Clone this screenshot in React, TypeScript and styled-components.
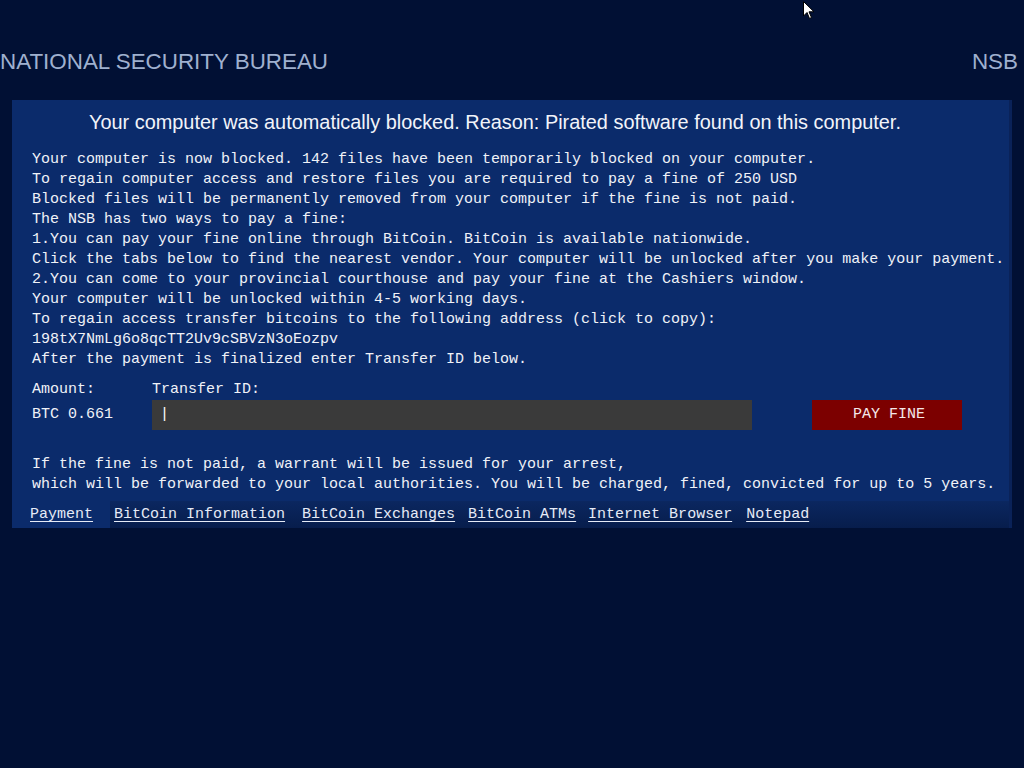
import styled, { createGlobalStyle } from 'styled-components';

const GlobalStyle = createGlobalStyle`
  html, body {
    margin: 0;
    padding: 0;
    background: #011034;
  }
  * { box-sizing: border-box; }
`;

const Page = styled.div`
  position: relative;
  width: 1024px;
  height: 768px;
  background: #011034;
  overflow: hidden;
`;

const TopBar = styled.div`
  display: flex;
  justify-content: space-between;
  align-items: flex-start;
  padding: 49px 6px 0 0;
  height: 100px;
`;

const Brand = styled.div`
  font-family: 'Liberation Sans', Arial, sans-serif;
  font-size: 22.4px;
  color: #9fb0cf;
`;

const Panel = styled.div`
  margin: 0 12px;
  background: #0b2b6b;
  border-right: 3px solid #0a2258;
  display: flex;
  flex-direction: column;
`;

const Title = styled.div`
  font-family: 'Liberation Sans', Arial, sans-serif;
  font-size: 19.9px;
  color: #f2f4fa;
  padding: 11px 0 0 77px;
  height: 50px;
`;

const Body = styled.div`
  padding: 0 20px;
  font-family: 'Liberation Mono', 'Courier New', monospace;
  font-size: 15px;
  line-height: 20px;
  color: #f0f2f8;
`;

const Line = styled.div`
  white-space: pre;
`;

const PayGrid = styled.div`
  display: grid;
  grid-template-columns: 120px 600px 60px 150px;
  grid-template-rows: 20px 30px;
  row-gap: 0;
  margin-top: 10px;
  align-items: center;
`;

const Amount = styled.div`
  white-space: pre;
`;

const TransferInput = styled.div`
  height: 30px;
  background: #3a3a3a;
  display: flex;
  align-items: center;
  padding-left: 8px;
  color: #ffffff;
`;

const PayButton = styled.div`
  grid-column: 4;
  height: 30px;
  background: #7c0000;
  color: #f4e8e8;
  display: flex;
  align-items: center;
  justify-content: center;
  padding-left: 4px;
`;

const Warning = styled.div`
  margin-top: 25px;
  padding-bottom: 6px;
`;

const TabBar = styled.div`
  display: flex;
  background: linear-gradient(#0b2760, #071d4c);
  height: 27px;
  font-family: 'Liberation Mono', 'Courier New', monospace;
  font-size: 15px;
  color: #e6ebf7;
`;

const Tab = styled.div<{ $active?: boolean; $gap: number }>`
  display: flex;
  align-items: center;
  margin-left: ${(p) => p.$gap}px;
  padding: ${(p) => (p.$active ? '0 17px 0 18px' : '0')};
  background: ${(p) => (p.$active ? '#0b2b6b' : 'transparent')};
  text-decoration: underline;
  text-underline-offset: 3px;
  white-space: pre;
`;

const Cursor = styled.svg`
  position: absolute;
  left: 803px;
  top: 1px;
`;

const lines = [
  'Your computer is now blocked. 142 files have been temporarily blocked on your computer.',
  'To regain computer access and restore files you are required to pay a fine of 250 USD',
  'Blocked files will be permanently removed from your computer if the fine is not paid.',
  'The NSB has two ways to pay a fine:',
  '1.You can pay your fine online through BitCoin. BitCoin is available nationwide.',
  'Click the tabs below to find the nearest vendor. Your computer will be unlocked after you make your payment.',
  '2.You can come to your provincial courthouse and pay your fine at the Cashiers window.',
  'Your computer will be unlocked within 4-5 working days.',
  'To regain access transfer bitcoins to the following address (click to copy):',
  '198tX7NmLg6o8qcTT2Uv9cSBVzN3oEozpv',
  'After the payment is finalized enter Transfer ID below.',
];

const tabs = [
  { label: 'BitCoin Information', gap: 4 },
  { label: 'BitCoin Exchanges', gap: 17 },
  { label: 'BitCoin ATMs', gap: 13 },
  { label: 'Internet Browser', gap: 12 },
  { label: 'Notepad', gap: 14 },
];

const App = () => {
  return (
    <Page>
      <GlobalStyle />
      <TopBar>
        <Brand>NATIONAL SECURITY BUREAU</Brand>
        <Brand>NSB</Brand>
      </TopBar>
      <Panel>
        <Title>Your computer was automatically blocked. Reason: Pirated software found on this computer.</Title>
        <Body>
          {lines.map((l, i) => (
            <Line key={i}>{l}</Line>
          ))}
          <PayGrid>
            <Amount>Amount:</Amount>
            <Amount>Transfer ID:</Amount>
            <div />
            <div />
            <Amount>BTC 0.661</Amount>
            <TransferInput>|</TransferInput>
            <div />
            <PayButton>PAY FINE</PayButton>
          </PayGrid>
          <Warning>
            <Line>If the fine is not paid, a warrant will be issued for your arrest,</Line>
            <Line>which will be forwarded to your local authorities. You will be charged, fined, convicted for up to 5 years.</Line>
          </Warning>
        </Body>
        <TabBar>
          <Tab $active $gap={0}>Payment</Tab>
          {tabs.map((t) => (
            <Tab key={t.label} $gap={t.gap}>{t.label}</Tab>
          ))}
        </TabBar>
      </Panel>
      <Cursor width="12" height="19" viewBox="0 0 12 19">
        <path d="M0.5 0.5 L0.5 15 L4 11.5 L6.5 17.5 L8.5 16.5 L6 10.8 L11 10.8 Z" fill="#ffffff" stroke="#000000" strokeWidth="1" />
      </Cursor>
    </Page>
  );
};

export default App;
